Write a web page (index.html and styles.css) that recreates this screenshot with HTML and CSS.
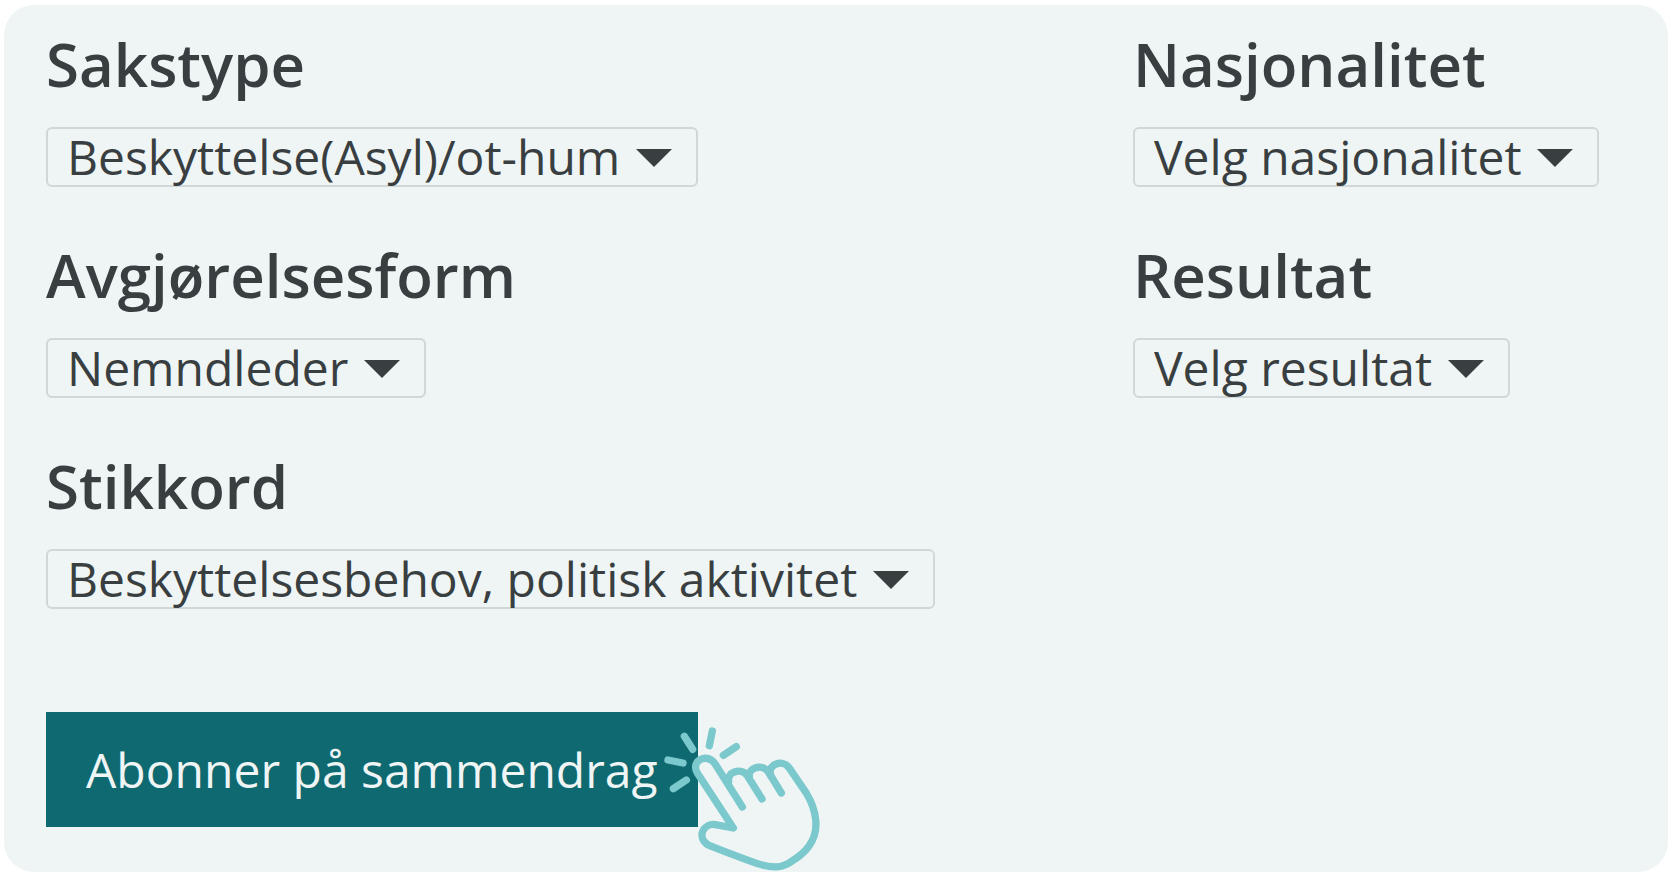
FILE: index.html
```html
<!DOCTYPE html>
<html lang="no">
<head>
    <meta charset="UTF-8">
    <meta name="viewport" content="width=device-width, initial-scale=1.0">
    <title>Abonner på sammendrag</title>
    <link rel="stylesheet" href="styles.css">
</head>
<body>
    <form class="filter-panel">
        <!-- Filters -->
        <div class="filters">
            <div class="form-group">
                <label for="sakstype">Sakstype</label>
                <div class="select-box">
                    <select id="sakstype">
                        <option>Beskyttelse(Asyl)/ot-hum</option>
                    </select>
                </div>
            </div>
            <div class="form-group">
                <label for="nasjonalitet">Nasjonalitet</label>
                <div class="select-box">
                    <select id="nasjonalitet">
                        <option value="">Velg nasjonalitet</option>
                    </select>
                </div>
            </div>
            <div class="form-group">
                <label for="avgjorelsesform">Avgjørelsesform</label>
                <div class="select-box">
                    <select id="avgjorelsesform">
                        <option>Nemndleder</option>
                    </select>
                </div>
            </div>
            <div class="form-group">
                <label for="resultat">Resultat</label>
                <div class="select-box">
                    <select id="resultat">
                        <option value="">Velg resultat</option>
                    </select>
                </div>
            </div>
            <div class="form-group">
                <label for="stikkord">Stikkord</label>
                <div class="select-box">
                    <select id="stikkord">
                        <option>Beskyttelsesbehov, politisk aktivitet</option>
                    </select>
                </div>
            </div>
        </div>

        <!-- Subscribe button with click hand -->
        <div class="subscribe">
            <button type="button" class="subscribe-btn">Abonner på sammendrag</button>
            <svg class="click-hand" viewBox="39 75 477 441" aria-hidden="true">
                <path d="M103 109L128 148M187 93L178 137M259 140L220 166M54 180L99 189M109 240L70 266"/>
                <path d="M277 321L196 193C184 175 168 172 152 178C137 185 132 202 142 219L250 384L196 374C179 371 164 380 158 394C152 411 160 427 177 436C225 455 275 474 320 490C358 503 388 506 414 491C440 475 462 461 477 438C494 414 500 385 497 359C494 330 483 302 468 278L417 203C408 189 390 187 376 193C361 200 356 215 364 230L394 279"/>
                <path d="M236 244C234 232 241 220 253 216C268 210 284 214 293 229L336 297"/>
                <path d="M298 231C296 219 303 208 315 204C330 198 346 203 355 216L364 230"/>
            </svg>
        </div>
    </form>
</body>
</html>
```

FILE: styles.css
```css
* {
    box-sizing: border-box;
}
body {
    margin: 0;
    padding: 5px 4px 8px;
    background: white;
    color: #393f41;
    font-family: "Open Sans", "Noto Sans", sans-serif;
}
.filter-panel {
    padding: 23px 41px 45px 42px;
    background: #eff5f5;
    border-radius: 30px;
}

/* Filters */
.filters {
    display: grid;
    grid-template-columns: 11fr 5fr;
    row-gap: 52px;
}
.form-group label {
    display: block;
    margin-bottom: 27px;
    font-size: 60px;
    font-weight: 600;
    line-height: 72px;
}
.select-box {
    position: relative;
    width: max-content;
    height: 60px;
    border: 2px solid #d0d7d7;
    border-radius: 6px;
}
/* taller than its box, so that descenders are not cut off */
.select-box select {
    display: block;
    height: 66px;
    margin: -6px 0 -4px;
    padding: 0 75px 0 19px;
    border: none;
    background: transparent;
    color: inherit;
    font-family: inherit;
    font-size: 48px;
    appearance: none;
    cursor: pointer;
}
.select-box::after {
    content: "";
    position: absolute;
    top: 20px;
    right: 24px;
    width: 36px;
    height: 18px;
    background: #393f41;
    clip-path: polygon(0 0, 100% 0, 50% 100%);
    pointer-events: none;
}

/* Subscribe */
.subscribe {
    position: relative;
    width: max-content;
    margin-top: 103px;
}
.subscribe-btn {
    display: block;
    padding: 25px 40px;
    border: none;
    background: #0f6970;
    color: #eff5f5;
    font-family: inherit;
    font-size: 48px;
    cursor: pointer;
}
.subscribe-btn:hover {
    background: #0b565c;
}
.click-hand {
    position: absolute;
    top: 13px;
    left: calc(100% - 35px);
    width: 159px;
    height: 147px;
    fill: none;
    stroke: #7bc8cd;
    stroke-width: 22;
    stroke-linecap: round;
    stroke-linejoin: round;
    pointer-events: none;
}
```
